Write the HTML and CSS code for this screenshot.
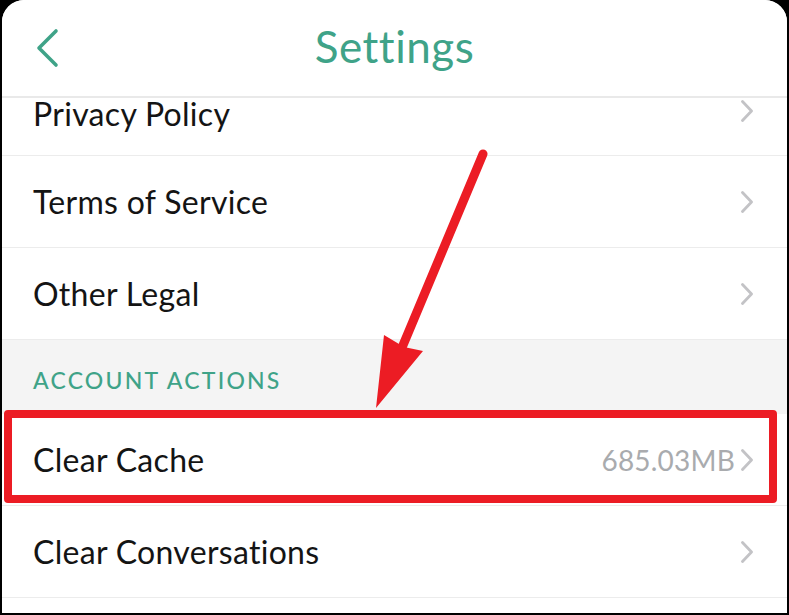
FILE: index.html
```html
<!DOCTYPE html>
<html>
<head>
<meta charset="utf-8">
<link rel="stylesheet" href="styles.css">
</head>
<body>
<div class="frame">
  <div class="screen">
    <header class="topbar">
      <svg class="back" width="30" height="44" viewBox="0 0 30 44"><polyline points="21,4 4,21 21,38" fill="none" stroke="#3fa388" stroke-width="3.6" stroke-linecap="round" stroke-linejoin="round"/></svg>
      <h1 class="title">Settings</h1>
    </header>
    <div class="list">
      <div class="row row-first"><span class="label">Privacy Policy</span><span class="chev"></span></div>
      <div class="row"><span class="label">Terms of Service</span><span class="chev"></span></div>
      <div class="row"><span class="label">Other Legal</span><span class="chev"></span></div>
      <div class="section">ACCOUNT ACTIONS</div>
      <div class="row"><span class="label">Clear Cache</span><span class="value">685.03MB</span><span class="chev"></span></div>
      <div class="row"><span class="label">Clear Conversations</span><span class="chev"></span></div>
    </div>
    <div class="highlight"></div>
    <svg class="arrow" width="789" height="615" viewBox="0 0 789 615">
      <line x1="483" y1="154" x2="401" y2="350" stroke="#ec1c24" stroke-width="9" stroke-linecap="round"/>
      <polygon points="384,335 376,408 423,351 404,347" fill="#ec1c24"/>
    </svg>
  </div>
</div>
</body>
</html>
```

FILE: styles.css
```css
html, body {
  margin: 0;
  padding: 0;
  background: #000;
}

.frame {
  width: 789px;
  height: 615px;
  background: #000;
  padding: 0 2px 2px 2px;
  box-sizing: border-box;
}

.screen {
  position: relative;
  width: 100%;
  height: 100%;
  background: #fff;
  border-radius: 22px 22px 0 0;
  overflow: hidden;
  display: flex;
  flex-direction: column;
  font-family: "Lato", "Open Sans", sans-serif;
}

.topbar {
  position: relative;
  z-index: 2;
  height: 96px;
  flex: 0 0 96px;
  background: #fff;
  border-bottom: 2px solid #e9e9e9;
  display: flex;
  align-items: center;
  justify-content: center;
}

.back {
  position: absolute;
  left: 33px;
  top: 27px;
}

.title {
  margin: 0;
  margin-top: -4px;
  font-weight: 400;
  font-size: 44px;
  line-height: 50px;
  color: #3fa388;
  letter-spacing: 0.5px;
}

.list {
  flex: 1;
}

.row {
  height: 92px;
  box-sizing: border-box;
  border-bottom: 1px solid #ececec;
  display: flex;
  align-items: center;
  padding: 0 34px 0 31px;
  background: #fff;
}

.row-first {
  height: 58px;
  padding-bottom: 25px;
}

.label {
  flex: 1;
  font-size: 32px;
  line-height: 32px;
  color: #141414;
  letter-spacing: 0.3px;
}

.value {
  font-size: 28px;
  line-height: 32px;
  color: #a9abae;
  letter-spacing: 0.2px;
  margin-right: 6px;
}

.chev {
  width: 12px;
  height: 22px;
  background: no-repeat center/12px 22px url("data:image/svg+xml;utf8,<svg xmlns='http://www.w3.org/2000/svg' width='12' height='22' viewBox='0 0 12 22'><polyline points='1.5,1.5 10.5,11 1.5,20.5' fill='none' stroke='%23c3c3c6' stroke-width='2.8' stroke-linecap='round' stroke-linejoin='round'/></svg>");
}

.row-first .chev {
  margin-top: -6px;
}

.section {
  height: 74px;
  background: #f4f4f4;
  box-sizing: border-box;
  padding: 26px 0 0 31px;
  font-size: 23px;
  letter-spacing: 2.2px;
  color: #3fa388;
  font-weight: 500;
}

.highlight {
  position: absolute;
  left: 2px;
  top: 410px;
  width: 773px;
  height: 93px;
  box-sizing: border-box;
  border: 8px solid #ec1c24;
  border-radius: 4px;
  z-index: 3;
}

.arrow {
  position: absolute;
  left: -2px;
  top: 0;
  z-index: 4;
}
```
